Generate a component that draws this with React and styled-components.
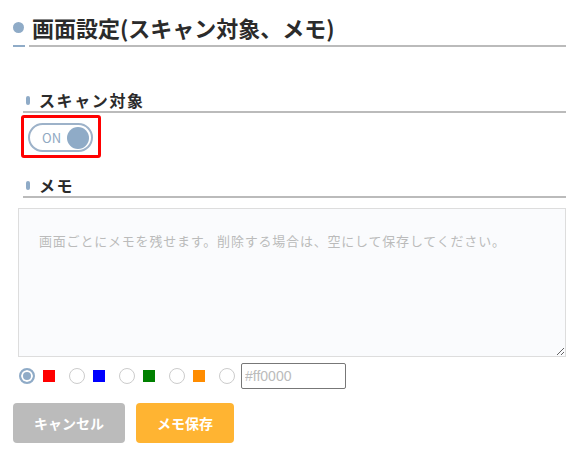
import React, { useState } from 'react'
import styled, { createGlobalStyle } from 'styled-components'

const GlobalStyle = createGlobalStyle`
  * { box-sizing: border-box; }
  body {
    margin: 0;
    background: #fff;
    font-family: "Noto Sans CJK JP", "Noto Sans", sans-serif;
    color: #2b2b2b;
  }
`

const Page = styled.div`
  width: 578px;
  padding: 0 12px 0 13px;
`

const TitleRow = styled.div`
  display: flex;
  gap: 4px;
`

const DotCell = styled.div`
  width: 12px;
  padding-top: 22px;
  border-bottom: 2px solid #8fabc7;
  span {
    display: block;
    width: 11px;
    height: 11px;
    border-radius: 50%;
    background: #8fabc7;
  }
`

const Title = styled.h2`
  flex: 1;
  margin: 0;
  padding: 12px 0 3px 3px;
  line-height: 30px;
  font-size: 22px;
  font-weight: 700;
  border-bottom: 2px solid #bbb;
`

const SectionHead = styled.h3`
  display: flex;
  align-items: center;
  gap: 9px;
  margin: ${p => p.$top}px 0 0 10px;
  padding-left: 3px;
  line-height: 22px;
  font-size: 16px;
  font-weight: 700;
  letter-spacing: 1.6px;
  border-bottom: 2px solid #bbb;
  &::before {
    content: '';
    width: 4px;
    height: 9px;
    border-radius: 2px;
    background: #8fabc7;
  }
`

const ToggleFrame = styled.div`
  display: inline-flex;
  margin: 2px 0 0 8px;
  padding: 5px 5px 3px 4px;
  border: 3px solid #f00;
  border-radius: 3px;
`

const Toggle = styled.button`
  display: flex;
  align-items: center;
  width: 65px;
  height: 29px;
  padding: 0 2px 0 12px;
  border: 2px solid #9db2c9;
  border-radius: 15px;
  background: #fff;
  cursor: pointer;
  font-family: inherit;
  font-size: 13px;
  color: #8fa8c2;
  span {
    flex: 1;
    text-align: left;
  }
  i {
    width: 22px;
    height: 22px;
    border-radius: 50%;
    background: #8fabc7;
  }
`

const Memo = styled.textarea`
  display: block;
  width: 548px;
  height: 149px;
  margin: 10px 0 0 5px;
  padding: 22px 20px;
  border: 1px solid #ddd;
  background: #fafbfd;
  font-family: inherit;
  font-size: 13px;
  letter-spacing: 0.8px;
  color: #333;
  outline: none;
  &::placeholder {
    color: #bbb;
  }
`

const ColorRow = styled.div`
  display: flex;
  align-items: center;
  margin: 6px 0 0 6px;
`

const ColorOption = styled.label`
  display: flex;
  align-items: center;
  gap: 8px;
  margin-right: ${p => (p.$last ? 6 : 14)}px;
  cursor: pointer;
`

const Radio = styled.input.attrs({ type: 'radio' })`
  appearance: none;
  width: 16px;
  height: 16px;
  margin: 0;
  border: 1px solid #ccc;
  border-radius: 50%;
  background: #fff;
  cursor: pointer;
  &:checked {
    border: 2px solid #8fabc7;
    background: #8fabc7;
    box-shadow: inset 0 0 0 2px #fff;
  }
`

const Swatch = styled.span`
  width: 12px;
  height: 12px;
  background: ${p => p.$color};
`

const HexInput = styled.input`
  width: 105px;
  height: 26px;
  padding: 0 3px;
  border: 1px solid #777;
  border-radius: 2px;
  font-family: "Liberation Sans", Arial, sans-serif;
  font-size: 14px;
  &::placeholder {
    color: #bbb;
  }
`

const ButtonRow = styled.div`
  display: flex;
  gap: 11px;
  margin-top: 14px;
`

const ActionBtn = styled.button`
  height: 40px;
  padding: 0 21px;
  border: none;
  border-radius: 4px;
  background: ${p => p.$bg};
  color: #fff;
  font-family: inherit;
  font-size: 14px;
  font-weight: 700;
  cursor: pointer;
`

const colors = ['#ff0000', '#0000ff', '#008000', '#ff8c00']

const App = () => {
  const [selected, setSelected] = useState(0)
  const [memo, setMemo] = useState('')

  return (
    <Page>
      <GlobalStyle />
      <TitleRow>
        <DotCell><span /></DotCell>
        <Title>画面設定(スキャン対象、メモ)</Title>
      </TitleRow>

      <SectionHead $top={42}>スキャン対象</SectionHead>
      <ToggleFrame>
        <Toggle>
          <span>ON</span>
          <i />
        </Toggle>
      </ToggleFrame>

      <SectionHead $top={16}>メモ</SectionHead>
      <Memo
        value={memo}
        onChange={e => setMemo(e.target.value)}
        placeholder="画面ごとにメモを残せます。削除する場合は、空にして保存してください。"
      />

      <ColorRow>
        {colors.map((c, i) => (
          <ColorOption key={c}>
            <Radio name="color" checked={selected === i} onChange={() => setSelected(i)} />
            <Swatch $color={c} />
          </ColorOption>
        ))}
        <ColorOption $last>
          <Radio name="color" checked={selected === 4} onChange={() => setSelected(4)} />
        </ColorOption>
        <HexInput placeholder="#ff0000" />
      </ColorRow>

      <ButtonRow>
        <ActionBtn $bg="#bbbbbb">キャンセル</ActionBtn>
        <ActionBtn $bg="#ffb432">メモ保存</ActionBtn>
      </ButtonRow>
    </Page>
  )
}

export default App
